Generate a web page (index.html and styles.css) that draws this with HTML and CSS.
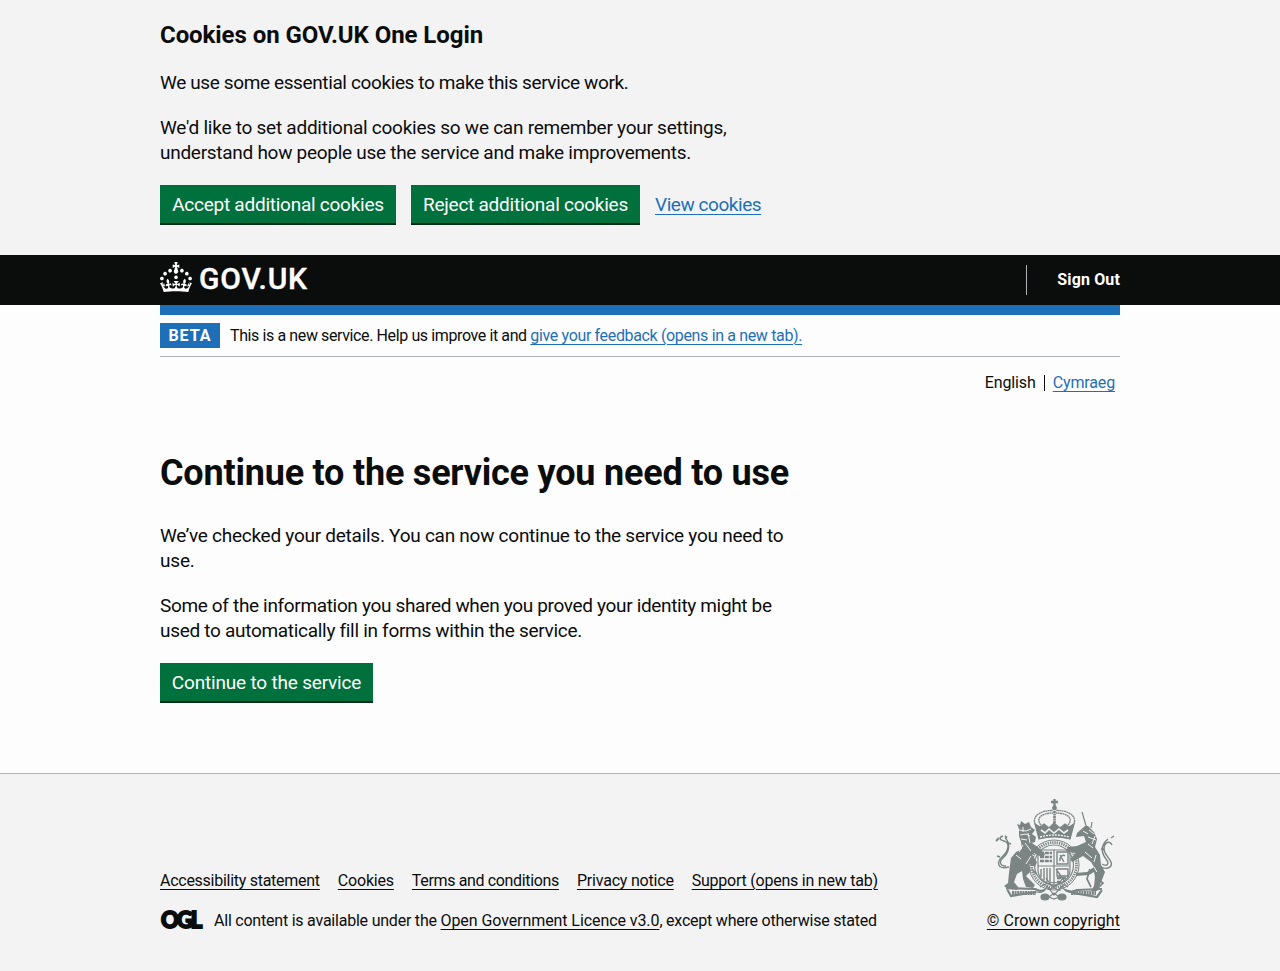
FILE: index.html
```html
<!DOCTYPE html>
<html lang="en">
<head>
<meta charset="utf-8">
<title>Continue to the service you need to use</title>
<link rel="stylesheet" href="styles.css">
</head>
<body>
<section class="cookies">
  <div class="container">
    <h2 class="cookies-title">Cookies on GOV.UK One Login</h2>
    <p><span class="c1">We use some essential cookies to make this service work.</span></p>
    <p><span class="c2">We'd like to set additional cookies so we can remember your settings,</span><br><span class="c3">understand how people use the service and make improvements.</span></p>
    <div class="button-group">
      <button class="button accept">Accept additional cookies</button>
      <button class="button reject">Reject additional cookies</button>
      <a class="link view" href="#">View cookies</a>
    </div>
  </div>
</section>
<header class="header">
  <div class="container header-row">
    <a class="logo" href="#">
      <svg class="crown" viewBox="0 0 32 30" width="32" height="30" fill="currentColor" aria-hidden="true"><path d="M22.6 10.4c-1 .4-2-.1-2.4-1-.4-.9.1-2 1-2.4.9-.4 2 .1 2.4 1s-.1 2-1 2.4m-5.9 6.7c-.9.4-2-.1-2.4-1-.4-.9.1-2 1-2.4.9-.4 2 .1 2.4 1s-.1 2-1 2.4m10.8-3.7c-1 .4-2-.1-2.4-1-.4-.9.1-2 1-2.4.9-.4 2 .1 2.4 1s0 2-1 2.4m3.3 4.8c-1 .4-2-.1-2.4-1-.4-.9.1-2 1-2.4.9-.4 2 .1 2.4 1s-.1 2-1 2.4M17 4.7l2.3 1.2V2.5l-2.3.7-.2-.2.9-3h-3.4l.9 3-.2.2c-.1.1-2.3-.7-2.3-.7v3.4L15 4.7c.1.1.1.2.2.2l-1.3 4c-.1.2-.1.4-.1.6 0 1.1.8 2 1.9 2.2h.7c1-.2 1.9-1.1 1.9-2.1 0-.2 0-.4-.1-.6l-1.3-4c-.1-.2 0-.2.1-.3m-7.6 5.7c.9.4 2-.1 2.4-1 .4-.9-.1-2-1-2.4-.9-.4-2 .1-2.4 1s0 2 1 2.4m-5 3c.9.4 2-.1 2.4-1 .4-.9-.1-2-1-2.4-.9-.4-2 .1-2.4 1s.1 2 1 2.4m-3.2 4.8c.9.4 2-.1 2.4-1 .4-.9-.1-2-1-2.4-.9-.4-2 .1-2.4 1s0 2 1 2.4m14.8 11c4.4 0 8.6.3 12.3.8 1.1-4.5 2.4-7 3.7-8.8l-2.5-.9c.2 1.3.3 1.9 0 2.7-.4-.4-.8-1.1-1.1-2.3l-1.2 4c.7-.5 1.3-.8 2-.9-1.1 2.5-2.6 3.1-3.5 3-1.1-.2-1.7-1.2-1.5-2.1.3-1.2 1.5-1.5 2.1-.1 1.1-2.3-.8-3-2-2.3 1.9-1.9 2.1-3.5.6-5.6-2.1 1.6-2.1 3.2-1.2 5.5-1.2-1.4-3.2-.6-2.5 1.6.9-1.4 2.1-.5 1.9.8-.2 1.1-1.7 2.1-3.5 1.9-2.7-.2-2.9-2.1-2.9-3.6.7-.1 1.9.5 2.9 1.9l.4-4.3c-1.1 1.1-2.1 1.4-3.2 1.4.4-1.2 2.1-3 2.1-3h-5.4s1.7 1.9 2.1 3c-1.1 0-2.1-.2-3.2-1.4l.4 4.3c1-1.4 2.2-2 2.9-1.9-.1 1.5-.2 3.4-2.9 3.6-1.9.2-3.4-.8-3.5-1.9-.2-1.3 1-2.2 1.9-.8.7-2.3-1.2-3-2.5-1.6.9-2.2.9-3.9-1.2-5.5-1.5 2-1.3 3.7.6 5.6-1.2-.7-3.1 0-2 2.3.6-1.4 1.8-1.1 2.1.1.2.9-.3 1.9-1.5 2.1-.9.2-2.4-.5-3.5-3 .6 0 1.2.3 2 .9l-1.2-4c-.3 1.1-.7 1.9-1.1 2.3-.3-.8-.2-1.4 0-2.7l-2.9.9C1.3 23 2.6 25.5 3.7 30c3.7-.5 7.9-.8 12.3-.8"/></svg>
      <span class="logo-text">GOV.UK</span>
    </a>
    <a class="sign-out" href="#">Sign Out</a>
  </div>
</header>
<div class="container">
  <div class="blue-bar"></div>
  <div class="phase"><strong class="tag">BETA</strong><span class="phase-text">This is a new service. Help us improve it and <a class="link" href="#">give your feedback (opens in a new tab).</a></span></div>
  <nav class="language"><span class="lang-current">English</span><a class="link lang-other" href="#">Cymraeg</a></nav>
  <main class="main">
    <h1>Continue to the service you need to use</h1>
    <p><span class="m1">We’ve checked your details. You can now continue to the service you need to</span><br><span class="m2">use.</span></p>
    <p><span class="m3">Some of the information you shared when you proved your identity might be</span><br><span class="m4">used to automatically fill in forms within the service.</span></p>
    <button class="button continue">Continue to the service</button>
  </main>
</div>
<footer class="footer">
  <div class="container footer-row">
    <div class="footer-main">
      <div class="footer-links">
        <a class="f1" href="#">Accessibility statement</a><a class="f2" href="#">Cookies</a><a class="f3" href="#">Terms and conditions</a><a class="f4" href="#">Privacy notice</a><a class="f5" href="#">Support (opens in new tab)</a>
      </div>
      <div class="licence"><span class="ogl">OGL</span><span class="licence-text">All content is available under the <a href="#">Open Government Licence v3.0</a>, except where otherwise stated</span></div>
    </div>
    <div class="copyright">
      <svg class="crest" viewBox="0 0 125 102" width="125" height="102" fill="none" stroke="#7b8583" stroke-width="1.2" aria-hidden="true">
        <!-- crown -->
        <path d="M62.500 0v10M59 3h7" stroke-width="2.400"/>
        <circle cx="62.500" cy="9" r="1.800" fill="#7b8583"/>
        <path d="M46 29C37 20 46 11 61 11.500M79 29c9-9 0-18-15-17.500M49 26c-6-7 1-12 12-12M76 26c6-7-1-12-12-12" stroke-width="1.300" stroke-dasharray="2 .4"/>
        <path d="M62.500 12v18" stroke-width="2.600" stroke-dasharray="2 .5"/>
        <path d="M43 25l5 3 4-3 5 4 5-5 6 5 5-4 4 3 5-3-4 15q-16-4-31 0z" fill="#7b8583"/>
        <path d="M49 31l4 3 4-4 5 4 5-4 5 4 4-3" stroke="#f3f3f3" stroke-width="1.600"/>
        <path d="M48 38q15-4 29 0" stroke="#f3f3f3" stroke-width="1.300" stroke-dasharray="2 1"/>
        <!-- garter and quartered shield -->
        <ellipse cx="62" cy="66" rx="25" ry="25" stroke-width="1"/>
        <ellipse cx="62" cy="66" rx="22.500" ry="22.500" stroke-width="2.800" stroke-dasharray="1.300 1"/>
        <ellipse cx="62" cy="66" rx="19.500" ry="20"/>
        <path d="M46 51h32v20c0 9-8 13-16 16-8-3-16-7-16-16zM62 51v35M46 67h32"/>
        <path d="M48 54h12M48 58h12M48 62h12M65 79h9M65 83h5" stroke-width="2.600" stroke-dasharray="4 .8"/>
        <path d="M65 53h11v12H65zM68 62c-1-4 3-7 5-5M68 56l4 7M64 70l9 13M49 70v8M52 69v12M55 69v14M58 69v15M65 70h11v7H65zM41 57l-3 4M40 70l4 5" stroke-width="1.400"/>
        <!-- lion supporter -->
        <path d="M27 30l-2-5 3 1 1-4 4 3 4-2 2 5 4 3-3 4 4 3-1 5-3 1 7 5 6 6-2 4-9-5-2 2 5 7-2 5-6-3 2 7-5 5 5 5 4 4-2 3-7-1-3-8-1-8-5 3-3 8 4 5-1 3-9-1-4-3 4-3 1-10 1-8 1-7 5-6 6-3-1-7-2-6z" fill="#7b8583" stroke="none"/>
        <path d="M27 31l7 1 5-2M28 36l6-1 4 2M29 40l6 1M24 56l5 4M33 44l6 8M26 76l5 4M31 28v5M36 34l2 10M31 46l-4 7M39 57l-5 8" stroke="#f3f3f3" stroke-width="1"/>
        <path d="M17 68C5 71 4 63 11 57c7-7 6-14 1-15-5-1-5-4-1-5M14 67C7 67 7 62 12 58c7-7 5-16 1-19" stroke-width="1.400"/>
        <path d="M7 39l-3 3M13 37l2 2M16 44l3 1M8 58l-3-1" stroke-width="1.800"/>
        <!-- unicorn supporter -->
        <path d="M93 27l-8 7-1 4 8-1 2 6-9 4-9 1-2 4 10 2-6 6 2 3 11-6 8 6 3 5-7 5-11 1v3l13-1 5-3 1 5-1 9-3 5h6l5-11 3-8-4-7-1-10-5-8 2-8-3-7-6-6z" fill="#7b8583" stroke="none"/>
        <path d="M95 30l-5-17M99 29l1-6" stroke-width="1.200"/>
        <path d="M91 32l5 3M97 31l5 4M96 38l8 3M96 45l5 4M93 53l7 6M104 56l-2 7M102 68l3 5M103 37l-3 8" stroke="#f3f3f3" stroke-width="1"/>
        <path d="M98 70l-3 10 4 8M103 78l8 6-5 5" stroke-width="1.700"/>
        <path d="M108 67c6 5 13 1 11-4-2-5-7-8-7-13 0-7 6-9 8-4M110 65c5 3 8 0 4-5-6-8-4-15 2-20M119 39l3-2M113 51l-4-1" stroke-width="1.400"/>
        <!-- compartment and motto scroll -->
        <path d="M14 89l29 1q5 3 10 1M110 90l-25 1q-5 3-12 0M15 90l4 7 25-4M110 91l-5 7-24-4" stroke-width="2.200"/>
        <path d="M20 94h24M79 94h25" stroke-width="4.200" stroke-dasharray="2 .6"/>
        <path d="M44 93q8 2 11-6l7 9 8-9q4 8 12 6M48 88q14-9 28 0M54 79q8 13 15 12M71 79q-8 12-16 11"/>
        <ellipse cx="53" cy="98" rx="4" ry="3" fill="#7b8583"/><ellipse cx="70" cy="98" rx="4" ry="3" fill="#7b8583"/>
        <path d="M57 98l5 2 5-2-5-4z"/>
      </svg>
      <a class="crown-link" href="#">© Crown copyright</a>
    </div>
  </div>
</footer>
</body>
</html>
```

FILE: styles.css
```css
* { box-sizing: border-box; }
body { margin: 0; background: #fdfdfd; color: #0b0c0c; font-family: Roboto, "Noto Sans", Arial, sans-serif; font-size: 19px; line-height: 25px; }
a { color: inherit; text-decoration-thickness: 1px; text-underline-offset: 3px; white-space: nowrap; }
p { margin: 0 0 20px; white-space: nowrap; }
h1, h2 { margin: 0; white-space: nowrap; }
.container { width: 960px; margin: 0 auto; }
.link { color: #1d70b8; }
.cookies { height: 255px; padding-top: 20px; background: #f3f3f3; }
.cookies-title { font-size: 24px; line-height: 30px; margin-bottom: 20px; letter-spacing: -.07px; }
.c1 { letter-spacing: -.38px; }
.c2 { letter-spacing: -.25px; }
.c3 { letter-spacing: -.28px; }
.button-group { display: flex; align-items: center; gap: 15px; height: 40px; }
.button { display: block; border: 0; padding: 7px 0 8px; height: 40px; background: #00703c; color: #fff; font: inherit; line-height: 25px; letter-spacing: -.25px; box-shadow: inset 0 -2px 0 #002d18; white-space: nowrap; }
.accept { width: 236px; }
.reject { width: 229px; }
.continue { width: 213px; letter-spacing: -.19px; }
.view { letter-spacing: -.45px; margin-top: -2px; }
.header { height: 50px; background: #0b0c0c; color: #fff; }
.header-row { display: flex; justify-content: space-between; }
.header a { text-decoration: none; }
.logo { display: flex; padding-top: 7px; gap: 7px; }
.logo-text { font-size: 30px; line-height: 34px; font-weight: 500; letter-spacing: .85px; -webkit-text-stroke: .4px #fff; }
.sign-out { margin-top: 10px; height: 30px; border-left: 1px solid #b1b4b6; padding-left: 30px; font-size: 16px; line-height: 30px; font-weight: 700; letter-spacing: .14px; }
.blue-bar { height: 10px; background: #1d70b8; }
.phase { display: flex; gap: 10px; height: 42px; padding-top: 8px; border-bottom: 1px solid #b1b4b6; font-size: 16px; line-height: 25px; }
.tag { width: 60px; height: 25px; background: #1d70b8; color: #fff; text-align: center; letter-spacing: 1px; }
.phase-text { white-space: nowrap; letter-spacing: -.39px; }
.phase-text a { letter-spacing: -.35px; }
.language { display: flex; justify-content: flex-end; height: 52px; padding: 16px 5px 0 0; font-size: 16px; line-height: 20px; }
.lang-current { position: relative; padding-right: 8px; margin-right: 9px; letter-spacing: -.12px; }
.lang-current::after { content: ""; position: absolute; right: -1px; top: 2px; width: 1px; height: 16px; background: #0b0c0c; }
.lang-other { letter-spacing: -.14px; }
.main { padding-top: 44px; height: 364px; }
h1 { font-size: 36px; line-height: 40px; margin-bottom: 30px; letter-spacing: -.21px; }
.m1 { letter-spacing: -.26px; }
.m2 { letter-spacing: -.2px; }
.m3 { letter-spacing: -.34px; }
.m4 { letter-spacing: -.3px; }
.footer { height: 198px; background: #f3f3f3; border-top: 1px solid #b1b4b6; font-size: 16px; line-height: 20px; }
.footer-row { display: flex; justify-content: space-between; padding-top: 25px; }
.footer-main { padding-top: 72px; }
.footer-links { display: flex; gap: 18px; margin-bottom: 20px; }
.f1 { letter-spacing: -.27px; }
.f2 { letter-spacing: -.2px; }
.f3 { letter-spacing: -.35px; }
.f4 { letter-spacing: -.2px; }
.f5 { letter-spacing: -.23px; }
.licence { display: flex; white-space: nowrap; }
.licence-text { letter-spacing: -.22px; }
.licence-text a { letter-spacing: -.08px; }
.ogl { width: 54px; font-family: Lato, sans-serif; font-size: 22px; font-weight: 900; line-height: 18px; letter-spacing: -2px; -webkit-text-stroke: 1.8px #0b0c0c; padding-left: 1px; }
.copyright { display: flex; flex-direction: column; align-items: flex-end; gap: 10px; }
.crest { display: block; margin-right: 3px; }
.crown-link { letter-spacing: .04px; }
```
